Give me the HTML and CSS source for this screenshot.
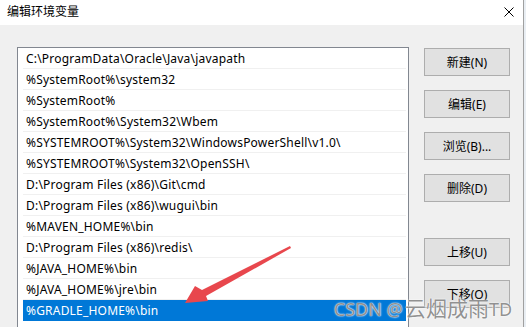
FILE: index.html
```html
<!DOCTYPE html>
<html lang="zh-CN">
  <head>
    <meta charset="UTF-8" />
    <title>编辑环境变量</title>
    <link rel="stylesheet" href="styles.css">
  </head>
  <body>
    <div class="window">
      <div class="titlebar">
        <span class="title">编辑环境变量</span>
        <svg class="close" width="10" height="10" viewBox="0 0 10 10">
          <path d="M0.5 0.5 L9.5 9.5 M9.5 0.5 L0.5 9.5" stroke="#000" stroke-width="1" />
        </svg>
      </div>
      <div class="content">
        <div class="list">
          <div class="row">C:\ProgramData\Oracle\Java\javapath</div>
          <div class="row">%SystemRoot%\system32</div>
          <div class="row">%SystemRoot%</div>
          <div class="row">%SystemRoot%\System32\Wbem</div>
          <div class="row">%SYSTEMROOT%\System32\WindowsPowerShell\v1.0\</div>
          <div class="row">%SYSTEMROOT%\System32\OpenSSH\</div>
          <div class="row">D:\Program Files (x86)\Git\cmd</div>
          <div class="row">D:\Program Files (x86)\wugui\bin</div>
          <div class="row">%MAVEN_HOME%\bin</div>
          <div class="row">D:\Program Files (x86)\redis\</div>
          <div class="row">%JAVA_HOME%\bin</div>
          <div class="row">%JAVA_HOME%\jre\bin</div>
          <div class="row selected">%GRADLE_HOME%\bin</div>
        </div>
        <div class="buttons">
          <button>新建(N)</button>
          <button>编辑(E)</button>
          <button>浏览(B)...</button>
          <button>删除(D)</button>
          <button class="spaced">上移(U)</button>
          <button>下移(O)</button>
        </div>
      </div>
    </div>
    <div class="edge"></div>

    <svg class="arrow" width="526" height="327" viewBox="0 0 526 327">
      <polygon fill="#e8474d" points="185,303 195,286 202,290 290,246 291,248 206,296 208,301" />
    </svg>
    <div class="watermark">CSDN @<span class="wm-cjk">云烟成雨</span>TD</div>
  </body>
</html>
```

FILE: styles.css
```css
body {
  margin: 0;
  width: 526px;
  height: 327px;
  overflow: hidden;
  font-family: "Noto Sans", "Noto Sans CJK SC", sans-serif;
  font-size: 12px;
  color: #000;
  background: #f0f0f0;
  display: flex;
  position: relative;
}
.window {
  width: 523px;
  height: 327px;
  display: flex;
  flex-direction: column;
  background: #f0f0f0;
  overflow: hidden;
}
.titlebar {
  height: 25px;
  flex-shrink: 0;
  background: #fff;
  display: flex;
  align-items: center;
  justify-content: space-between;
  padding: 0 9px 4px 7px;
  box-sizing: border-box;
}
.title {
  font-family: "Noto Sans CJK SC", sans-serif;
}
.close {
  margin-top: 2px;
}
.content {
  display: flex;
  gap: 15px;
  padding: 22px 0 0 17px;
}
.list {
  width: 383px;
  height: 280px;
  border: 1px solid #828790;
  border-bottom: none;
  background: #fff;
  padding: 0 2px 0 5px;
  display: flex;
  flex-direction: column;
}
.row {
  height: 21px;
  line-height: 18px;
  padding: 2px 0 0 3px;
  border-bottom: 1px solid #f0f0f0;
  box-sizing: border-box;
  white-space: nowrap;
  overflow: hidden;
  flex-shrink: 0;
  letter-spacing: 0.2px;
}
.row.selected {
  background: #0078d7;
  color: #fff;
  border-bottom-color: #0078d7;
}
.buttons {
  display: flex;
  flex-direction: column;
  gap: 14px;
  padding-top: 1px;
}
button {
  width: 86px;
  height: 28px;
  flex-shrink: 0;
  border: 1px solid #adadad;
  background: #e1e1e1;
  font-family: "Noto Sans", "Noto Sans CJK SC", sans-serif;
  font-size: 12px;
  color: #000;
  padding: 0;
}
button.spaced {
  margin-top: 22px;
}
.edge {
  width: 2px;
  height: 327px;
  border-left: 1px solid #a0a0a0;
  background: #e9eef3;
}
.arrow {
  position: absolute;
  left: 0;
  top: 0;
}
.watermark {
  position: absolute;
  left: 334px;
  top: 294px;
  font-family: "Noto Sans", "Noto Sans CJK SC", sans-serif;
  font-size: 18px;
  line-height: 26px;
  color: rgba(125, 125, 125, 0.85);
  text-shadow: 0 0 2px #fff, 0 0 1px #fff;
  white-space: nowrap;
}
.wm-cjk {
  font-family: "Noto Sans CJK SC", sans-serif;
  font-size: 21px;
  margin-left: 2px;
}
```
